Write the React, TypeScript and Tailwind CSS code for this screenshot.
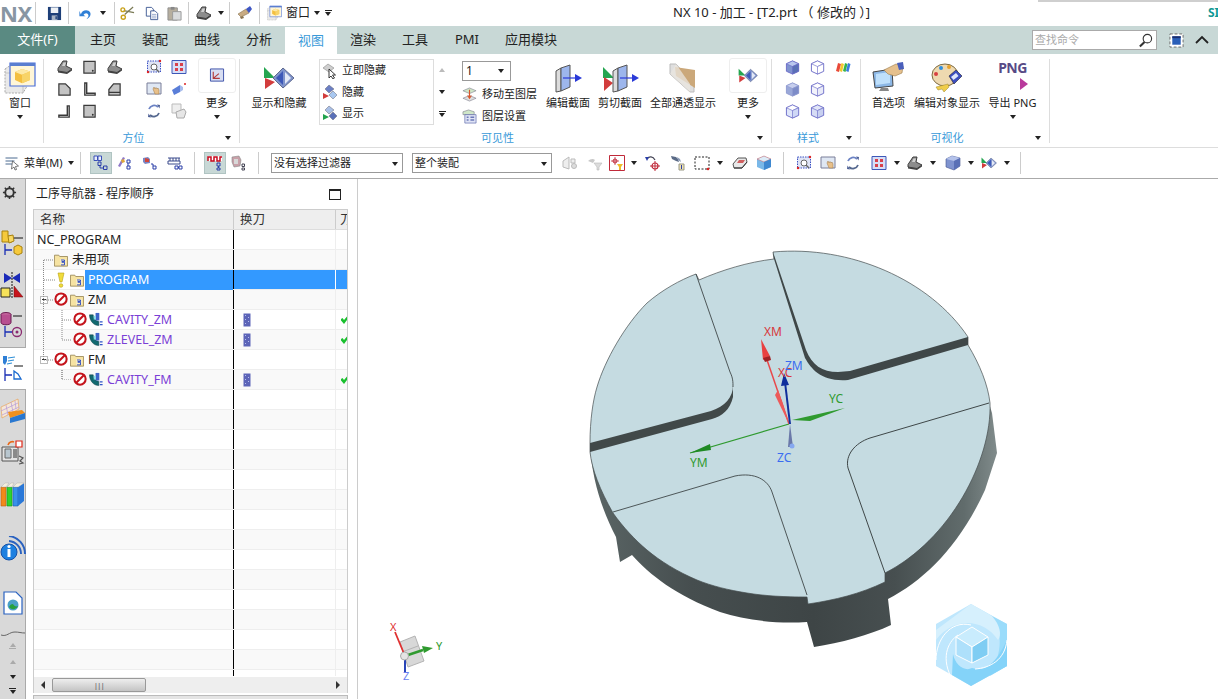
import type { ReactNode } from "react";

function Svg({ c = "w-4 h-4", v = "0 0 16 16", children }: { c?: string; v?: string; children: ReactNode }) {
  return (
    <svg viewBox={v} className={`${c} shrink-0 block`}>
      {children}
    </svg>
  );
}

function Caret({ c = "" }: { c?: string }) {
  return <span className={`block w-0 h-0 shrink-0 border-x-[3.5px] border-t-[4px] border-x-transparent border-t-[#222] ${c}`} />;
}

function Sep({ c = "" }: { c?: string }) {
  return <span className={`block w-px h-[22px] shrink-0 bg-[#ccc] ${c}`} />;
}

/* ---- quick access ---- */
const Save = () => (
  <Svg c="w-[15px] h-[15px] ml-[11px]">
    <path d="M1 1h14v14H1z" fill="#1d3f78" />
    <path d="M4 1.500h8v6H4z" fill="#eef1f5" />
    <path d="M5 10h6v5H5z" fill="#a7b3c4" />
    <path d="M9 11h1.500v3H9z" fill="#1d3f78" />
  </Svg>
);
const Undo = () => (
  <Svg c="w-[15px] h-[15px] ml-[9px]">
    <path d="M3 9C4 4 11 3 13 7c1.300 3-1 6-4 7 2-2 3-4 1.500-5.500C9 7 6.500 8 6 9.500L8 11H1.500V5z" fill="#2f7fd6" />
  </Svg>
);
const Scissors = () => (
  <Svg c="w-[15px] h-[15px] ml-[5px]">
    <path d="M14 1L5 9M15 7L4 5" stroke="#7a7a55" strokeWidth="1.300" />
    <circle cx="3.500" cy="12" r="2.200" fill="none" stroke="#c9a21c" strokeWidth="1.500" />
    <circle cx="3" cy="4" r="2" fill="none" stroke="#c9a21c" strokeWidth="1.500" />
  </Svg>
);
const Copy = () => (
  <Svg c="w-[14px] h-[15px] ml-[10px]">
    <path d="M1.500 1h6l2 2v8h-8z" fill="#fff" stroke="#34508e" />
    <path d="M6.500 5h5l3 3v7h-8z" fill="#fff" stroke="#34508e" />
    <path d="M8 9h5M8 11h5M8 13h5" stroke="#8fa0c8" />
  </Svg>
);
const Paste = () => (
  <Svg c="w-[15px] h-[15px] ml-[8px]">
    <path d="M1 2h10v13H1z" fill="#b6ae9e" stroke="#8f8f8f" />
    <path d="M4 1h4v3H4z" fill="#888" />
    <path d="M6 6h9v9H6z" fill="#d9dbdd" stroke="#999" />
  </Svg>
);
function TriView({ c = "w-4 h-4" }: { c?: string }) {
  return (
    <Svg c={c}>
      <path d="M1 9.500L6 2h4l-1 5 6 3-5 3.500L1 12z" fill="#8c8c8c" stroke="#3c3c3c" />
      <path d="M1 12l9 1.500L15 10v1.500L10 15 1 13.500z" fill="#3f3f3f" />
      <path d="M6.500 3.500h2.500L8 7H5z" fill="#d0d0d0" />
    </Svg>
  );
}
const Eraser = () => (
  <Svg c="w-4 h-4 ml-[7px]">
    <path d="M1 9l8-5 3 4-8 4z" fill="#c8ab83" stroke="#8a7350" strokeWidth=".6" />
    <path d="M9 4l4-3 2 3-3 4z" fill="#3e56c4" />
    <path d="M3 12l3-1 1 2-3 1z" fill="#8b7450" />
  </Svg>
);
function WinCube({ c = "w-[15px] h-[16px]" }: { c?: string }) {
  return (
    <Svg c={c}>
      <path d="M0.500 3.500l3-2h9v9l-3 5h-9z" fill="#e9e9e9" stroke="#aaa" strokeWidth=".5" strokeDasharray="1 .6" />
      <path d="M0.500 5.500l9 0v10" fill="none" stroke="#bbb" strokeWidth=".4" />
      <path d="M3 0.500h12.500v11.500H3z" fill="#fff6d8" stroke="#4a6ed8" strokeWidth=".6" />
      <path d="M3 0.500h12.500v1.500H3z" fill="#5a7ed0" />
      <path d="M9 3.500l4 1.300v4.200l-4 1.600-3.500-1.600V5z" fill="#f4bf3f" />
      <path d="M5.500 5l3.500 1.400 4-1.600-4-1.300z" fill="#fde9a6" />
      <path d="M9 6.400l4-1.600V9l-4 1.600z" fill="#f8d468" />
    </Svg>
  );
}

/* ---- orientation views ---- */
const vFront = "M2 1.500h12v12.500H2z";
function View({ d, dot }: { d: string; dot?: boolean }) {
  return (
    <Svg c="w-[15px] h-[15px]">
      <path d={d} fill="#c4c4c4" stroke="#3a3a3a" strokeWidth="1.300" />
      {dot && <circle cx="11.500" cy="11.500" r="1" fill="#333" />}
    </Svg>
  );
}
function LView({ d }: { d: string }) {
  return (
    <Svg c="w-[15px] h-[15px]">
      <path d={d} fill="none" stroke="#3a3a3a" strokeWidth="1.500" />
    </Svg>
  );
}
const FitIcon = () => (
  <Svg>
    <path d="M1.500 2h13v11h-13z" fill="#dfe4f6" stroke="#3b50c2" strokeDasharray="1.500 1" />
    <circle cx="8" cy="8" r="3" fill="#fff" stroke="#666" />
    <path d="M10 10l3 3" stroke="#666" strokeWidth="1.400" />
    <circle cx="14" cy="2" r="1.200" fill="#d22" />
    <circle cx="2" cy="13" r="1.200" fill="#d22" />
  </Svg>
);
const GridFit = () => (
  <Svg>
    <path d="M1 1.500h14v13H1z" fill="#d7def6" stroke="#3d57b8" />
    <path d="M4 4h3v3H4zM9 4h3v3H9zM4 9h3v3H4zM9 9h3v3H9z" fill="#d8404a" />
  </Svg>
);
const PanIcon = () => (
  <Svg>
    <path d="M1 2h14v11H1z" fill="#dfe7f3" stroke="#7a7f99" />
    <path d="M7 8l1-2 1 2 1-1.500 1 1.500 1-1 1 2v4H9z" fill="#e8c08a" stroke="#9c7440" strokeWidth=".5" />
  </Svg>
);
const PerspIcon = () => (
  <Svg>
    <path d="M1 9l8-5v7l-6 3z" fill="#5a7ed8" />
    <path d="M9 4l3 2v3l-3 2z" fill="#a7bcec" />
    <circle cx="14" cy="3" r="1" fill="#d22" />
  </Svg>
);
const RotateIcon = () => (
  <Svg>
    <path d="M3 6a5.500 5.500 0 0 1 9-2" fill="none" stroke="#6c83c4" strokeWidth="1.800" />
    <path d="M13 10a5.500 5.500 0 0 1-9 2" fill="none" stroke="#55688f" strokeWidth="1.800" />
    <path d="M11 1.500l3 .5-.5 3.500zM5 14.500L2 14l.5-3.500z" fill="#4d5f95" />
  </Svg>
);
const FaintDoc = () => (
  <Svg>
    <path d="M1 1h9v9H1z" fill="#eee" stroke="#bbb" />
    <path d="M5 9l8-3 2 3-2 6H6z" fill="#e6e6e6" stroke="#aaa" />
  </Svg>
);
const MoreView = () => (
  <Svg c="w-[16px] h-[15px]">
    <path d="M1 1h14v13H1z" fill="#d8def2" stroke="#3a4fa8" />
    <path d="M4 4v7h7M4 11l6-5" fill="none" stroke="#b23a3a" strokeWidth="1.200" />
  </Svg>
);
function ShowHide({ c = "w-4 h-4" }: { c?: string }) {
  return (
    <Svg c={c} v="0 0 32 24">
      <path d="M1 1l11 11-11 0z" fill="#25a550" />
      <path d="M2 23V12l10 4z" fill="#d23c3c" />
      <path d="M20 2l11 10-11 10-10-10z" fill="#7f93cc" stroke="#5f6a8f" />
      <path d="M20 5v14l-7-7z" fill="#3d58b8" />
      <path d="M22 6l6 6-6 6z" fill="#e4e9f6" />
    </Svg>
  );
}
const MoreShowHide = () => <ShowHide c="w-[20px] h-[15px]" />;
const HideNow = () => (
  <Svg>
    <path d="M1 5l5-4 6 4-5 4z" fill="#cfcfcf" stroke="#888" strokeWidth=".6" />
    <path d="M7 6l0 9 2-2 2 3 1.500-1-2-3 3 0z" fill="#fff" stroke="#222" strokeWidth=".9" />
  </Svg>
);
const HideIcon = ({ show }: { show?: boolean }) => (
  <Svg>
    <path d="M7 1l5 4-5 4-4-4z" fill={show ? "#a9bfe6" : "#6b7fc4"} stroke="#667" strokeWidth=".5" />
    <path d="M11 7l4 4-4 4-4-4z" fill={show ? "#5a70b8" : "#a9c8f0"} stroke="#667" strokeWidth=".5" />
    <path d="M1 9l6 3-6 3z" fill={show ? "#22a34e" : "#d23c3c"} />
  </Svg>
);
const MoveLayer = () => (
  <Svg c="w-[15px] h-[15px]">
    <path d="M1 4l7-3 7 3-7 3z" fill="#cfe6c8" stroke="#778" strokeWidth=".6" />
    <path d="M1 12l7-3 7 3-7 3z" fill="#dedede" stroke="#778" strokeWidth=".6" />
    <path d="M8 3v8M6 9l2 3 2-3" fill="none" stroke="#d8562a" strokeWidth="1.200" />
  </Svg>
);
const LayerSet = () => (
  <Svg c="w-[15px] h-[15px]">
    <path d="M1 3l6-2 6 2v3H1z" fill="#cfe6c8" stroke="#778" strokeWidth=".6" />
    <path d="M3 6h12v9H3z" fill="#dfe3f5" stroke="#5a66a8" strokeWidth=".7" />
    <path d="M5 8h2v1.500H5zM9 8h4v1.500H9zM5 11h2v1.500H5zM9 11h4v1.500H9z" fill="#6c79b8" />
  </Svg>
);
function Section({ cut }: { cut?: boolean }) {
  return (
    <Svg c="w-[37px] h-[30px]" v="0 0 37 30">
      {cut && <path d="M1 4l11 11H1z" fill="#25a550" />}
      {cut && <path d="M2 28V14l9 6z" fill="#d23c3c" />}
      <path d={cut ? "M11 8l5-3v23l-5 1z" : "M6 8l5-3v23l-5 1z"} fill="#dcdcdc" stroke="#555" />
      <path d={cut ? "M16 5l9-3v22l-9 4z" : "M11 5l9-3v22l-9 4z"} fill="#9db6ec" stroke="#555" />
      <path d={cut ? "M18 15h14" : "M13 15h14"} stroke="#2a3ad8" strokeWidth="1.200" />
      <path d={cut ? "M30 11l7 4-7 4z" : "M25 11l7 4-7 4z"} fill="#2a3ad8" />
    </Svg>
  );
}
const Transparent = () => (
  <Svg c="w-[30px] h-[32px]" v="0 0 30 32">
    <path d="M2 2l6 0 18 20v8h-4L2 12z" fill="#dfdfdf" stroke="#bbb" />
    <path d="M7 5l20 3v18L8 14z" fill="#cba87a" />
    <path d="M2 12l20 18v-8L8 2z" fill="#e9e6df" opacity=".75" />
  </Svg>
);
function Cube({ top, left, right, stroke = "#6c6cc8", c = "" }: { top: string; left: string; right: string; stroke?: string; c?: string }) {
  return (
    <Svg c={`w-[15px] h-[15px] ${c}`}>
      <path d="M8 1l6.500 3v8L8 15l-6.500-3V4z" fill={left} stroke={stroke} />
      <path d="M8 1l6.500 3L8 7 1.500 4z" fill={top} stroke={stroke} strokeWidth=".7" />
      <path d="M8 7l6.500-3v8L8 15z" fill={right} stroke={stroke} strokeWidth=".7" />
    </Svg>
  );
}
const Rainbow = () => (
  <Svg>
    <path d="M1 12L3 4l3 1-2 8z" fill="#e94a3a" />
    <path d="M4.500 12l2-8 2.500 1-2 8z" fill="#f4c92e" />
    <path d="M8 12l2-8 2.500 1-2 8z" fill="#36b44a" />
    <path d="M11 12l2-8 2.500 1-2 8z" fill="#3a7be0" />
  </Svg>
);
const Prefs = () => (
  <Svg c="w-[33px] h-[32px]" v="0 0 33 32">
    <path d="M1 10l19-3 1 17-18 2z" fill="#8db8e6" stroke="#444" />
    <path d="M4 12l14-2v11l-14 2z" fill="#bfe0fb" />
    <path d="M9 26h7l1 3H7z" fill="#888" />
    <path d="M12 8l12-6 7 2-1 7-7 3-7-2z" fill="#e5c08d" stroke="#9a7a4a" strokeWidth=".6" />
    <path d="M25 1l6-1 1 7-5 1z" fill="#4a5fbb" />
  </Svg>
);
const Palette = () => (
  <Svg c="w-[32px] h-[32px]" v="0 0 32 32">
    <ellipse cx="14" cy="13" rx="13" ry="11" fill="#eed9b0" stroke="#7d6a40" />
    <circle cx="10" cy="6" r="2" fill="#2f8fe0" />
    <circle cx="18" cy="5" r="2" fill="#e8a22c" />
    <circle cx="5" cy="12" r="2" fill="#d84040" />
    <path d="M18 14l7-6 6 6-8 8z" fill="#3c4ec0" stroke="#223" strokeWidth=".6" />
    <path d="M20 15l5-4 2.500 3-5 4z" fill="#dfe6fb" />
    <path d="M5 25l12-3 1 3-5 5-2-3-4 1z" fill="#f0cd4a" stroke="#9c862c" strokeWidth=".5" />
  </Svg>
);
const Search = () => (
  <Svg c="w-[15px] h-[15px]">
    <circle cx="10" cy="6" r="4.500" fill="#fff" stroke="#333" strokeWidth="1.200" />
    <path d="M7 9.500L2 14.500" stroke="#333" strokeWidth="2.200" />
  </Svg>
);

/* ---- navigator tree ---- */
const Folder = () => (
  <Svg c="w-[14px] h-[14px]">
    <path d="M0.500 2.500h5l1 1.500h9v11H0.500z" fill="#f6e3a2" stroke="#9c8a5a" />
    <path d="M7 7h6.500v6.500H7z" fill="#f8edc6" />
    <path d="M8 8h4v1.800H9v.8h3v3H8" fill="none" stroke="#1f3fc0" strokeWidth="1" />
  </Svg>
);
const NoEntry = () => (
  <Svg c="w-[15px] h-[15px]">
    <circle cx="7.500" cy="7.500" r="6" fill="#fff" stroke="#c4141c" strokeWidth="2.200" />
    <path d="M3.500 11.500l8-8" stroke="#c4141c" strokeWidth="2.200" />
  </Svg>
);
const Bulb = () => (
  <Svg c="w-[8px] h-[16px]" v="0 0 8 16">
    <path d="M1 1h6L5 10H3z" fill="#f0dc3c" stroke="#b8a010" strokeWidth=".6" />
    <circle cx="4" cy="13.500" r="1.800" fill="#f0dc3c" stroke="#b8a010" strokeWidth=".6" />
  </Svg>
);
const OpIcon = () => (
  <Svg c="w-[15px] h-[15px]">
    <path d="M0.500 3h4c0 4 2 6.500 6 7v4.500C5 14.500 0.500 9.500 0.500 3z" fill="#126a70" stroke="#0a3a40" strokeWidth=".5" />
    <path d="M7 1h4v8H7z" fill="#3d64c8" />
    <path d="M5 4h2v4H5z" fill="#7ee0ea" />
    <path d="M11.500 10.500h3M11.500 13.500h3" stroke="#2f55c8" strokeWidth="1.200" />
  </Svg>
);
const ToolBar = () => (
  <Svg c="w-[8px] h-[14px]" v="0 0 8 14">
    <path d="M0.500 0.500h7v13h-7z" fill="#5c64b8" />
    <path d="M2 2h1v1H2zM5 4h1v1H5zM2 6h1v1H2zM5 8h1v1H5zM2 10h1v1H2z" fill="#b8c0ee" />
  </Svg>
);
const Tick = () => (
  <Svg c="w-[8px] h-[8px]" v="0 0 8 8">
    <path d="M0 3l1.500-1 1.500 2L6.500 0 8 1.500 3 8 0 4.500z" fill="#19c02e" />
  </Svg>
);
const Minus = () => (
  <span className="flex items-center justify-center w-[8px] h-[8px] shrink-0 border border-[#bbb] bg-white">
    <span className="block w-[4px] h-px bg-[#333]" />
  </span>
);

type TreeRow = { kind: "root" | "unused" | "program" | "group" | "op"; name: string };
const treeRows: TreeRow[] = [
  { kind: "root", name: "NC_PROGRAM" },
  { kind: "unused", name: "未用项" },
  { kind: "program", name: "PROGRAM" },
  { kind: "group", name: "ZM" },
  { kind: "op", name: "CAVITY_ZM" },
  { kind: "op", name: "ZLEVEL_ZM" },
  { kind: "group", name: "FM" },
  { kind: "op", name: "CAVITY_FM" },
];

function Row({ row, index }: { row?: TreeRow; index: number }) {
  const selected = row?.kind === "program";
  return (
    <div className={`flex h-[20px] shrink-0 border-b border-[#eee] text-[12.5px] text-[#222] ${index % 2 === 1 ? "bg-[#f9f9f9]" : "bg-white"}`}>
      <div className="flex items-center w-[199px] shrink-0">
        {row?.kind === "root" && <span className="ml-[3px] mt-px">{row.name}</span>}
        {row?.kind === "unused" && (
          <>
            <span className="ml-[20px]"><Folder /></span>
            <span className="ml-[4px] mt-px">{row.name}</span>
          </>
        )}
        {row?.kind === "program" && (
          <>
            <span className="ml-[23px]"><Bulb /></span>
            <span className="ml-[5px]"><Folder /></span>
            <span className="flex items-center ml-px h-[20px] flex-1 bg-[#3399ff] text-white pl-[3px] pt-px">{row.name}</span>
          </>
        )}
        {row?.kind === "group" && (
          <>
            <span className="ml-[6px]"><Minus /></span>
            <span className="ml-[6px]"><NoEntry /></span>
            <span className="ml-px"><Folder /></span>
            <span className="ml-[4px] mt-px">{row.name}</span>
          </>
        )}
        {row?.kind === "op" && (
          <>
            <span className="ml-[39px]"><NoEntry /></span>
            <span className="ml-px"><OpIcon /></span>
            <span className="ml-[3px] mt-px text-[#7a3fd6]">{row.name}</span>
          </>
        )}
      </div>
      <div className="w-px shrink-0 bg-black" />
      <div className={`flex items-center w-[101px] shrink-0 pl-[9px] ${selected ? "bg-[#3399ff]" : ""}`}>
        {row?.kind === "op" && <ToolBar />}
      </div>
      <div className={`w-px shrink-0 ${selected ? "bg-white" : "bg-[#eee]"}`} />
      <div className={`flex items-center flex-1 overflow-hidden pl-[5px] ${selected ? "bg-[#3399ff]" : ""}`}>
        {row?.kind === "op" && <Tick />}
      </div>
    </div>
  );
}

/* ---- ribbon bits ---- */
function Large({ icon, label, caret, c = "" }: { icon: ReactNode; label: string; caret?: boolean; c?: string }) {
  return (
    <div className={`flex flex-col items-center shrink-0 ${c}`}>
      <div className="flex items-center justify-center h-[37px]">{icon}</div>
      <div className="h-[14px] leading-[14px] whitespace-nowrap">{label}</div>
      {caret && <Caret c="mt-[5px]" />}
    </div>
  );
}

function More({ c = "", icon }: { c?: string; icon: ReactNode }) {
  return (
    <div className={`flex flex-col items-center w-[38px] shrink-0 ${c}`}>
      <div className="flex items-center justify-center w-[38px] h-[35px] mt-[-1px] mb-[3px] rounded-[3px] border border-[#eee]">
        {icon}
      </div>
      <div className="h-[14px] leading-[14px]">更多</div>
      <Caret c="mt-[5px]" />
    </div>
  );
}

function Group({ w, title, plain, children }: { w: string; title: string; plain?: boolean; children: ReactNode }) {
  return (
    <div className={`flex flex-col h-[84px] shrink-0 border-r border-[#ddd] ${w}`}>
      <div className="flex h-[72px] items-start">{children}</div>
      <div className="flex h-[12px] leading-[14px]">
        <span className="flex-1 text-center text-[#3a9ad9]">{title}</span>
        {!plain && <span className="flex items-center w-[16px] h-[14px] pl-[2px]"><Caret /></span>}
      </div>
    </div>
  );
}

/* ---- side rail ---- */
const RailAssembly = () => (
  <Svg c="w-[26px] h-[28px]" v="0 0 26 28">
    <path d="M2 2h6v5h4v6H2z" fill="#f6c93c" stroke="#a8820e" />
    <path d="M8 7l5-1 1 6-5 2z" fill="#f8d863" stroke="#a8820e" />
    <path d="M14 9h9" stroke="#111" />
    <path d="M5 15v11M5 21h7" stroke="#1a2fb4" strokeWidth="1.300" />
    <path d="M14 18l4-2 4 2v6l-4 2-4-2z" fill="#f6c93c" stroke="#a8820e" />
  </Svg>
);
const RailMirror = () => (
  <Svg c="w-[26px] h-[28px]" v="0 0 26 28">
    <path d="M4 2l8 5-8 5zM20 2l-8 5 8 5z" fill="#1a2ab8" />
    <path d="M12 1v26" stroke="#111" strokeDasharray="2 1" />
    <path d="M1 17h9v9H1z" fill="#f6e25a" stroke="#222" />
    <path d="M14 26V15l9 11z" fill="#c8141c" stroke="#611" strokeWidth=".5" />
  </Svg>
);
const RailTool = () => (
  <Svg c="w-[26px] h-[28px]" v="0 0 26 28">
    <ellipse cx="6" cy="3.500" rx="5" ry="2" fill="#c86aa0" stroke="#6a1a50" />
    <path d="M1 3.500v8c0 3 10 3 10 0v-8" fill="#b84f90" stroke="#6a1a50" />
    <path d="M13 5h9" stroke="#111" />
    <path d="M5 15v11M5 21h7" stroke="#1a2fb4" strokeWidth="1.300" />
    <circle cx="17" cy="21" r="4.500" fill="none" stroke="#8a2a70" strokeWidth="1.300" />
    <circle cx="17" cy="21" r="1.500" fill="#8a2a70" />
  </Svg>
);
const RailOps = () => (
  <Svg c="w-[26px] h-[28px]" v="0 0 26 28">
    <path d="M3 1h4v5l-2 4-2-2z" fill="#2f7fd6" />
    <path d="M8 3l7-1M8 6l6-1M7 9l5-1" stroke="#2f8fd6" strokeWidth="1.200" />
    <path d="M14 11h9" stroke="#111" />
    <path d="M5 13v13M5 20h7" stroke="#1a2fb4" strokeWidth="1.300" />
    <path d="M14 16v8h7l-3-5z" fill="#fff" stroke="#1a6ad0" strokeWidth="1.300" />
  </Svg>
);
const RailMesh = () => (
  <Svg c="w-[26px] h-[26px]" v="0 0 26 26">
    <path d="M1 9l17-8 1 10-17 9z" fill="#f5e7d8" stroke="#e89a4a" strokeWidth=".6" />
    <path d="M6 7l2 10M11 4l2 10M15 3l1 8M1 13l17-8M2 17l17-8" stroke="#b49ad8" strokeWidth=".7" />
    <path d="M8 14l14-2 3 3-15 5z" fill="#f0901e" />
    <path d="M10 20l15-5v6l-15 4z" fill="#2a78d0" />
  </Svg>
);
const RailMachine = () => (
  <Svg c="w-[26px] h-[26px]" v="0 0 26 26">
    <path d="M2 7h16v14H2z" fill="#e3e3e3" stroke="#555" />
    <path d="M5 9h6v9H5z" fill="#b8c6cf" stroke="#666" />
    <path d="M13 9h4v9h-4z" fill="#8a8a8a" />
    <path d="M8 5c1-3 4-4 6-3" fill="none" stroke="#e86a1a" strokeWidth="1.600" />
    <path d="M16 1h6v6h-6z" fill="#fff" stroke="#e02a1a" strokeWidth="1.200" />
    <path d="M19 16l4 2-3 3 3 2-4 1" fill="none" stroke="#555" strokeWidth="1.200" />
  </Svg>
);
const RailBooks = () => (
  <Svg c="w-[26px] h-[26px]" v="0 0 26 26">
    <path d="M1 6h5v19H1z" fill="#f28a1a" stroke="#b85a10" strokeWidth=".6" />
    <path d="M7 6h5v19H7z" fill="#2ed42e" stroke="#149014" strokeWidth=".6" />
    <path d="M13 6h5v19h-5z" fill="#3a90ea" stroke="#1a5ab0" strokeWidth=".6" />
    <path d="M18 6l6-4v18l-6 5z" fill="#2a78d8" />
    <path d="M1 6l4-4h4L6 6zM7 6l4-4h3l-2 4zM13 6l4-4h7l-6 4z" fill="#f3efe0" stroke="#aaa" strokeWidth=".4" />
  </Svg>
);
const RailInfo = () => (
  <Svg c="w-[26px] h-[26px]" v="0 0 26 26">
    <path d="M9 5a13 13 0 0 1 12 13" fill="none" stroke="#2a62c0" strokeWidth="2" />
    <path d="M9 0a18 18 0 0 1 16 18" fill="none" stroke="#2a62c0" strokeWidth="2" />
    <circle cx="9" cy="16" r="8" fill="#1e80e0" stroke="#1450a8" />
    <path d="M7.500 13h3v8h-3z" fill="#fff" />
    <circle cx="9" cy="10.500" r="1.600" fill="#fff" />
  </Svg>
);
const RailWeb = () => (
  <Svg c="w-[22px] h-[24px]" v="0 0 22 24">
    <path d="M2 1h12l6 6v16H2z" fill="#fff" stroke="#2a62c0" strokeWidth="1.200" />
    <circle cx="11" cy="14" r="5.500" fill="#4aa0c8" />
    <path d="M7 16c2 3 7 3 9-1-2 1-4 0-5-2-2 0-3 1-4 3z" fill="#26a03e" />
  </Svg>
);

/* ---- toolbar ---- */
const Nav = () => (
  <Svg>
    <path d="M1 1h3.500v4.500H1zM5 1h3.500v4.500H5z" fill="#e8eefc" stroke="#3a50b8" />
    <path d="M5 7h3v3.500H5zM10.500 11h3.500v3.500h-3.500zM7 10.500v2.500h3.500" fill="none" stroke="#2a3ea8" />
  </Svg>
);
const Nav2 = () => (
  <Svg>
    <path d="M1 11l5-9 2 1-5 9z" fill="#8f78c8" />
    <path d="M4 5l3-1 1 3-3 1z" fill="#e0a83a" />
    <path d="M10 5h3v3h-3zM10 11h3v3h-3zM11 8v3" fill="none" stroke="#2a3ea8" />
  </Svg>
);
const Nav3 = () => (
  <Svg>
    <path d="M1 3l5-1 2 2v4l-5 1-2-2z" fill="#7a86c4" />
    <path d="M3 3l4 1v3H3z" fill="#d0463c" />
    <path d="M9 9h2v5h3v-3h-3" fill="none" stroke="#2a3ea8" />
  </Svg>
);
const Nav4 = () => (
  <Svg>
    <path d="M1 3h12M1 6h12v3H1zM3 3v3M6 3v3M9 3v3M12 3v3" fill="none" stroke="#3a4a8c" />
    <path d="M8 11h3v3H8zM12 11h3v3h-3zM11 12.500h1" fill="none" stroke="#2a3ea8" />
  </Svg>
);
const NavRed = () => (
  <Svg>
    <path d="M1 1h14v5H1z" fill="#fff" />
    <path d="M1 6V2h3v4h3V2h3v4h3V2h2" fill="none" stroke="#c80a1e" strokeWidth="1.500" />
    <path d="M10 8h3v3h-3zM10 13h3v2h-3zM11.500 11v2" fill="none" stroke="#2a3ea8" />
  </Svg>
);
const NavFaint = () => (
  <Svg>
    <path d="M1 2l7-1 2 4-1 6-6 1-2-5z" fill="#c8a0a8" stroke="#888" strokeWidth=".6" />
    <path d="M3 4h4v5H3z" fill="#d8d8d8" />
    <path d="M11 9h2.500v2.500H11zM11 13h2.500v2H11z" fill="none" stroke="#445" />
  </Svg>
);
const Faint1 = () => (
  <Svg>
    <path d="M1 6l6-4v12l-6-2zM9 4h4v4H9z" fill="#eee" stroke="#bbb" />
    <circle cx="12" cy="11" r="2.500" fill="#ddd" stroke="#bbb" />
  </Svg>
);
const Faint2 = () => (
  <Svg>
    <path d="M1 6c2-2 5-3 7-1l-2 3z" fill="#c8c8c8" />
    <path d="M7 8h8l-3 4v3h-2v-3z" fill="#dcdcdc" stroke="#bbb" strokeWidth=".6" />
  </Svg>
);
const FilterBox = () => (
  <Svg>
    <path d="M0.500 0.500h15v15h-15z" fill="#fff" stroke="#c02a3a" />
    <circle cx="6" cy="6" r="2" fill="none" stroke="#c02a3a" />
    <path d="M6 2v8M2 6h8" stroke="#c02a3a" strokeWidth=".8" />
    <path d="M8 9h6l-2 3v3h-2v-3z" fill="#f0bc2a" />
  </Svg>
);
const Pick = () => (
  <Svg>
    <circle cx="10" cy="11" r="3" fill="none" stroke="#c02a3a" strokeWidth="1.200" />
    <path d="M10 6v10M5 11h10" stroke="#c02a3a" />
    <path d="M2 4c2-3 6-3 8 1" fill="none" stroke="#445" strokeWidth="1.200" />
    <path d="M0 2l4 0-2 4z" fill="#2a3ea8" />
  </Svg>
);
const Binoc = () => (
  <Svg>
    <path d="M1 1l5 1 2 2 1 3-3-1-4-2z" fill="#5a6a86" />
    <path d="M7 2l3 2 1 3-3-2z" fill="#8a9ab6" />
    <path d="M9 9h5v6H9z" fill="#f0e2b0" stroke="#998" />
    <path d="M11 10h1v4h-1z" fill="#2a3ea8" />
  </Svg>
);
const DashBox = () => (
  <Svg>
    <path d="M1 2h14v12H1z" fill="none" stroke="#222" strokeDasharray="2 1.500" />
    <circle cx="14" cy="14" r="1.300" fill="#d22" />
  </Svg>
);
const Eraser3d = () => (
  <Svg>
    <path d="M1 9l5-6h8l1 4-5 6H2z" fill="#e8e8e8" stroke="#555" />
    <path d="M7 5h6l-2 3H5z" fill="#d06060" />
    <path d="M2 13l8 0 5-6" fill="none" stroke="#333" />
  </Svg>
);
const CubeWire = () => (
  <Svg>
    <path d="M1 4l7-3 7 3v8l-7 3-7-3z" fill="#7ab8e8" />
    <path d="M1 4l7 3 7-3-7-3z" fill="#dcecf8" stroke="#d06060" strokeWidth=".5" />
    <path d="M8 7v8l7-3V4z" fill="#3f88d0" />
  </Svg>
);
const BlueBox = () => (
  <Svg>
    <path d="M1 4l6-3 8 2v8l-6 4-8-3z" fill="#7f93cf" stroke="#44548f" strokeWidth=".6" />
    <path d="M1 4l8 2 6-3-8-2z" fill="#b4c2ea" />
    <path d="M9 6v9l6-4V3z" fill="#5a70b6" />
  </Svg>
);

/* ---- part in the graphics window ---- */
function Viewport() {
  return (
    <svg viewBox="358 179 860 520" className="block w-full h-full">
      <defs>
        <linearGradient id="wall" gradientUnits="userSpaceOnUse" x1="589" y1="0" x2="997" y2="0">
          <stop offset="0" stopColor="#5b6666" />
          <stop offset="0.25" stopColor="#464e4f" />
          <stop offset="0.55" stopColor="#3e4546" />
          <stop offset="0.75" stopColor="#474f50" />
          <stop offset="0.92" stopColor="#616c6c" />
          <stop offset="1" stopColor="#808b8b" />
        </linearGradient>
      </defs>
      <path
        d="M590 445C592 480 602 510 616 537L620 562L632 555C650 575 675 595 720 612C745 620 775 624 807 622L814 647C840 643 870 635 891 625L888 599C925 580 960 545 985 490L997 453L992 413L989 403L790 300Z"
        fill="url(#wall)"
      />
      <path
        d="M590 443C590 420 593 400 597 387C605 360 625 325 647 303C662 290 680 280 696 274L699 280C722 270 748 262 774 259L773 252C850 245 930 280 968 337L968 345C980 365 988 385 990 403C992 460 950 540 885 573L885 582C860 594 835 600 808 604L807 597C785 597 765 596 747 593C728 590 712 586 697 580C678 572 660 561 647 550C635 540 623 527 613 513C600 490 592 470 590 452Z"
        fill="#c5dbe1"
        stroke="#454c4d"
        strokeWidth="0.7"
      />
      {/* walls of the raised pads */}
      <path d="M773 252L806 350C812 365 822 372 838 372L850 371L968 337L968 345L848 380C822 382 812 370 805 358L774 259Z" fill="#3f4748" />
      <path d="M590 443L711 411C725 406 733 398 733 385L733 397C730 410 722 416 712 419L590 452Z" fill="#414949" />
      <path d="M696 274L730 372C733 378 733 382 733 387" fill="none" stroke="#3f4748" strokeWidth="0.9" />
      <path d="M613 512L735 476C755 472 768 480 772 492L807 595" fill="none" stroke="#3f4748" strokeWidth="0.9" />
      <path d="M989 403L870 438C855 443 845 455 848 468L885 573" fill="none" stroke="#3f4748" strokeWidth="1" />
      {/* datum axes */}
      <path d="M789 424L690 453" stroke="#2f9a2f" strokeWidth="1.300" />
      <path d="M690 453L710 444L711 450Z" fill="#1f8a24" />
      <path d="M792 420L845 408L810 421Z" fill="#2f9a2f" />
      <path d="M789 424L766 357" stroke="#e8484a" strokeWidth="1.500" />
      <path d="M778 390L783 404L789 424L775 395Z" fill="#ec5a5a" />
      <path d="M761 339L770 356L763 360Z" fill="#e84040" />
      <path d="M763 358L770 356L771 360L765 362Z" fill="#a02024" />
      <path d="M790 424L785 382" stroke="#0f2f9c" strokeWidth="2" />
      <path d="M784 373L789 385L781 386Z" fill="#0f2f9c" />
      <path d="M790 424L793 447L788 447Z" fill="#6a78a8" />
      <circle cx="792" cy="446" r="2.500" fill="#86a8f0" />
      <g fontSize="12" fontFamily="Noto Sans, sans-serif">
        <text x="764" y="336" fill="#d8383c">XM</text>
        <text x="778" y="377" fill="#d8383c">XC</text>
        <text x="785" y="370" fill="#3a6cf0">ZM</text>
        <text x="829" y="403" fill="#2f9a2f">YC</text>
        <text x="690" y="467" fill="#2f9a2f">YM</text>
        <text x="777" y="462" fill="#3a6cf0">ZC</text>
      </g>
      {/* small triad */}
      <path d="M400 642L415 636L424 661L408 667Z" fill="#d8d8d8" stroke="#b4b4b4" />
      <path d="M402 652L418 646" stroke="#b4b4b4" />
      <path d="M405 656L395 632" stroke="#e03030" strokeWidth="1.800" />
      <path d="M405 656L405 672" stroke="#1230b0" strokeWidth="1.800" />
      <path d="M405 656L423 650" stroke="#2f9a2f" strokeWidth="2.500" />
      <path d="M422 646L433 648L424 653Z" fill="#2f9a2f" />
      <circle cx="404.500" cy="656" r="4" fill="#e4e4e4" stroke="#aaa" />
      <g fontSize="11" fontFamily="Noto Sans, sans-serif">
        <text x="390" y="631" fill="#e03030">X</text>
        <text x="436" y="650" fill="#2f9a2f">Y</text>
        <text x="403" y="680" fill="#6a80f0">Z</text>
      </g>
      {/* watermark */}
      <path d="M971 604L1007 624V666L971 686L936 666V624Z" fill="#bfe7fd" />
      <path d="M990 615L1007 624V666L990 676C1003 650 1003 632 990 615Z" fill="#9adcfb" />
      <path d="M936 630L971 604L992 616C1000 625 1002 635 998 640C985 620 955 615 936 640Z" fill="#d6f0fd" />
      <path d="M953 654C955 665 965 672 972 668C985 672 995 665 1007 640V666L971 686L952 675Z" fill="#84d3f9" />
      <path d="M936 660C936 640 950 620 971 625M951 677C940 655 950 640 958 635M1007 640C1005 660 990 668 975 669" fill="none" stroke="#fff" strokeWidth="1" />
      <path d="M972 627L988 637L972 647L956 637Z" fill="#c9ecfd" stroke="#fff" />
      <path d="M956 637L972 647V663L956 655Z" fill="#aee0fb" stroke="#fff" />
      <path d="M988 637L972 647V663L988 655Z" fill="#7fcdf3" stroke="#fff" />
    </svg>
  );
}

export default function App() {
  return (
    <div className="flex flex-col w-[1218px] h-[699px] overflow-hidden bg-white text-[11px] text-[#222] font-['Noto_Sans','Noto_Sans_CJK_SC',sans-serif]">
      {/* title bar */}
      <div className="relative flex items-center h-[26px] shrink-0">
        <div className="flex items-center w-[673px] shrink-0">
          <span className="w-[31px] text-[22px] leading-none font-bold tracking-[-0.5px] whitespace-nowrap text-[#8896a3]">NX</span>
          <Sep c="ml-[4px]" />
          <Save />
          <Sep c="ml-[6px]" />
          <Undo />
          <Caret c="ml-[7px]" />
          <Sep c="ml-[8px]" />
          <Scissors />
          <Copy />
          <Paste />
          <Sep c="ml-[6px]" />
          <TriView c="w-4 h-4 ml-[7px]" />
          <Caret c="ml-[6px]" />
          <Sep c="ml-[5px]" />
          <Eraser />
          <Sep c="ml-[6px]" />
          <WinCube c="w-[15px] h-[16px] ml-[7px]" />
          <span className="ml-[4px] text-[12px] w-[24px]">窗口</span>
          <Caret c="ml-[4px]" />
          <span className="flex flex-col ml-[5px] gap-px">
            <span className="block w-[7px] h-px bg-[#222]" />
            <Caret />
          </span>
        </div>
        <span className="text-[13px] whitespace-nowrap">NX 10 - 加工 - [T2.prt （ 修改的 ）]</span>
        <span className="ml-auto w-[10px] text-[12px] font-bold text-[#0f9a96]">SI</span>
        <span className="absolute top-0 right-0 w-[180px] h-[2px] bg-[#cfcfcf]" />
      </div>

      {/* tabs */}
      <div className="flex items-stretch h-[28px] shrink-0 bg-[#c8d8d6] text-[13px]">
        <div className="flex items-center justify-center w-[75px] bg-[#5a8a82] text-white">文件(F)</div>
        <div className="w-[2px]" />
        {["主页", "装配", "曲线", "分析"].map((t) => (
          <div key={t} className="flex items-center justify-center w-[52px]">{t}</div>
        ))}
        <div className="flex items-center justify-center w-[52px] mt-px bg-white text-[#3a9ad9]">视图</div>
        {["渲染", "工具", "PMI"].map((t) => (
          <div key={t} className="flex items-center justify-center w-[52px]">{t}</div>
        ))}
        <div className="flex items-center justify-center w-[76px]">应用模块</div>
        <div className="flex items-center justify-between w-[125px] h-[20px] self-center ml-auto bg-white border border-[#aaa] pl-[2px] pr-[3px] text-[11px] text-[#aaa]">
          查找命令
          <Search />
        </div>
        <div className="flex items-center w-[61px] pl-[12px]">
          <Svg c="w-[15px] h-[15px]">
            <path d="M1 1h14v14H1z" fill="#fff" stroke="#666" strokeDasharray="3 2" />
            <path d="M3.500 3.500h9v9h-9z" fill="#2a5fb8" />
            <path d="M3.500 3.500h9v2h-9z" fill="#1a2f70" />
          </Svg>
          <Svg c="w-[14px] h-[10px] ml-[11px]" v="0 0 14 10">
            <path d="M1 8l6-6 6 6" fill="none" stroke="#222" strokeWidth="1.800" />
          </Svg>
        </div>
      </div>

      {/* ribbon */}
      <div className="flex h-[94px] shrink-0 pt-[5px] border-b border-[#ddd]">
        <Group w="w-[44px]" title="" plain>
          <Large c="w-[40px]" caret label="窗口" icon={<WinCube c="w-[32px] h-[32px]" />} />
        </Group>
        <Group w="w-[196px]" title="方位">
          <div className="grid grid-cols-[25px_25px_25px] auto-rows-[22px] justify-items-center items-center ml-[8px] mt-[-3px]">
            <TriView />
            <View dot d={vFront} />
            <TriView />
            <View d="M2 2h7l5 5v7H2z" />
            <LView d="M3 1v13h11v-2H5V1z" />
            <View d="M2 14V8l5-6h7v12zM2 11h12" />
            <LView d="M13 2v12H2v-2h9V2z" />
            <View dot d={vFront} />
          </div>
          <div className="grid grid-cols-[25px_25px] auto-rows-[22px] justify-items-center items-center ml-[14px] mt-[-3px]">
            <FitIcon />
            <GridFit />
            <PanIcon />
            <PerspIcon />
            <RotateIcon />
            <FaintDoc />
          </div>
          <More c="ml-[7px]" icon={<MoreView />} />
        </Group>
        <Group w="w-[532px]" title="可见性">
          <Large c="ml-[11px] w-[56px]" label="显示和隐藏" icon={<ShowHide c="w-[32px] h-[24px]" />} />
          <div className="flex flex-col w-[115px] h-[66px] ml-[12px] border border-[#ddd] shrink-0">
            {[
              { t: "立即隐藏", i: <HideNow /> },
              { t: "隐藏", i: <HideIcon /> },
              { t: "显示", i: <HideIcon show /> },
            ].map((r) => (
              <div key={r.t} className="flex items-center h-[22px] pl-[2px] gap-[4px]">
                {r.i}
                <span>{r.t}</span>
              </div>
            ))}
          </div>
          <div className="flex flex-col items-center w-[16px] h-[66px] shrink-0">
            <div className="flex items-center h-[22px]">
              <span className="block w-0 h-0 border-x-[3.5px] border-b-[4px] border-x-transparent border-b-[#bbb]" />
            </div>
            <div className="flex items-center h-[22px]"><Caret /></div>
            <div className="flex flex-col items-center justify-center h-[22px] gap-px">
              <span className="block w-[7px] h-px bg-[#222]" />
              <Caret />
            </div>
          </div>
          <div className="flex flex-col w-[76px] ml-[12px] shrink-0">
            <div className="flex items-center justify-between w-[49px] h-[20px] mt-[2px] border border-[#999] px-[3px] text-[12px]">
              1
              <Caret c="mr-[3px]" />
            </div>
            <div className="flex items-center gap-[5px] h-[22px] mt-[2px]">
              <MoveLayer />
              <span className="whitespace-nowrap">移动至图层</span>
            </div>
            <div className="flex items-center gap-[5px] h-[22px]">
              <LayerSet />
              <span className="whitespace-nowrap">图层设置</span>
            </div>
          </div>
          <Large c="ml-[8px] w-[44px]" label="编辑截面" icon={<Section />} />
          <Large c="ml-[8px] w-[44px]" label="剪切截面" icon={<Section cut />} />
          <Large c="ml-[8px] w-[66px]" label="全部通透显示" icon={<Transparent />} />
          <More c="ml-[13px]" icon={<MoreShowHide />} />
        </Group>
        <Group w="w-[89px]" title="样式">
          <div className="grid grid-cols-[25px_25px_25px] auto-rows-[22px] justify-items-center items-center ml-[8px] mt-[-3px]">
            <Cube top="#b9c6ee" left="#7f93cf" right="#5a70b6" />
            <Cube top="#fff" left="#fff" right="#fff" />
            <Rainbow />
            <Cube top="#c7cfee" left="#9aa8d8" right="#7d8cc8" stroke="#8f9ad0" />
            <Cube top="#fff" left="#f2f3fb" right="#e8eaf8" />
            <span />
            <Cube top="#fff" left="#dfe6fa" right="#cfd8f6" />
            <Cube top="#e2e6f8" left="#d6dcf5" right="#c8d0f0" />
          </div>
        </Group>
        <Group w="w-[189px]" title="可视化">
          <Large c="ml-[11px] w-[33px]" label="首选项" icon={<Prefs />} />
          <Large c="ml-[8px] w-[68px]" label="编辑对象显示" icon={<Palette />} />
          <div className="flex flex-col items-center w-[49px] ml-[7px] shrink-0">
            <div className="flex flex-col items-center h-[37px] pt-px text-[14px] leading-[16px] font-bold tracking-[-0.5px] text-[#574a86]">
              PNG
              <span className="block w-0 h-0 ml-[22px] mt-[2px] border-y-[6px] border-l-[8px] border-y-transparent border-l-[#b83a9c]" />
            </div>
            <div className="h-[14px] leading-[14px] whitespace-nowrap">导出 PNG</div>
            <Caret c="mt-[5px]" />
          </div>
        </Group>
      </div>

      {/* selection bar */}
      <div className="flex items-center h-[31px] shrink-0 border-b border-[#aaa]">
        <Svg c="w-[17px] h-4 ml-[4px]">
          <path d="M1 3h12M1 6h9M1 9h7" stroke="#4a6a90" />
          <path d="M8 6l6 5-3 .5 1 3-1.500.5-1-3L7 14z" fill="#fff" stroke="#444" strokeWidth=".7" />
        </Svg>
        <span className="ml-[3px] mt-px w-[40px] whitespace-nowrap">菜单(M)</span>
        <Caret c="ml-[4px]" />
        <Sep c="ml-[6px]" />
        <span className="flex items-center justify-center ml-[9px] w-[22px] h-[22px] shrink-0 bg-[#c8d8d6] border border-[#b0c4c2]"><Nav /></span>
        <span className="ml-[5px]"><Nav2 /></span>
        <span className="ml-[9px]"><Nav3 /></span>
        <span className="ml-[9px]"><Nav4 /></span>
        <Sep c="ml-[11px]" />
        <span className="flex items-center justify-center ml-[9px] w-[22px] h-[22px] shrink-0 bg-[#c8d8d6] border border-[#b0c4c2]"><NavRed /></span>
        <span className="ml-[5px]"><NavFaint /></span>
        <Sep c="ml-[11px]" />
        <div className="flex items-center justify-between ml-[12px] w-[132px] h-[20px] shrink-0 border border-[#999] px-[2px] pt-px">
          没有选择过滤器
          <Caret c="mr-[2px]" />
        </div>
        <div className="flex items-center justify-between ml-[9px] w-[140px] h-[20px] shrink-0 border border-[#999] px-[2px] pt-px">
          整个装配
          <Caret c="mr-[2px]" />
        </div>
        <span className="ml-[10px]"><Faint1 /></span>
        <span className="ml-[9px]"><Faint2 /></span>
        <span className="ml-[6px]"><FilterBox /></span>
        <Caret c="ml-[6px]" />
        <span className="ml-[8px]"><Pick /></span>
        <span className="ml-[9px]"><Binoc /></span>
        <span className="ml-[8px]"><DashBox /></span>
        <Caret c="ml-[7px]" />
        <span className="ml-[9px]"><Eraser3d /></span>
        <span className="ml-[8px]"><CubeWire /></span>
        <Sep c="ml-[11px]" />
        <span className="ml-[12px]"><FitIcon /></span>
        <span className="ml-[8px]"><PanIcon /></span>
        <span className="ml-[9px]"><RotateIcon /></span>
        <span className="ml-[10px]"><GridFit /></span>
        <Caret c="ml-[7px]" />
        <span className="ml-[7px]"><TriView /></span>
        <Caret c="ml-[7px]" />
        <span className="ml-[9px]"><BlueBox /></span>
        <Caret c="ml-[7px]" />
        <span className="ml-[7px]"><ShowHide /></span>
        <Caret c="ml-[7px]" />
        <Sep c="ml-[10px]" />
      </div>

      {/* main */}
      <div className="flex flex-1 min-h-0">
        <div className="flex flex-col items-center w-[26px] shrink-0 overflow-visible bg-[#d9d9d9] border-r border-[#aaa]">
          <div className="flex items-center justify-center h-[26px] w-full">
            <Svg c="w-[15px] h-[15px] mr-[7px]">
              <circle cx="8" cy="8" r="4.500" fill="none" stroke="#333" strokeWidth="2" />
              <path d="M8 1v2.500M8 12.500V15M1 8h2.500M12.500 8H15M3 3l1.800 1.800M11.200 11.200L13 13M3 13l1.800-1.800M11.200 4.800L13 3" stroke="#333" strokeWidth="1.600" />
            </Svg>
          </div>
          <div className="mt-[24px]"><RailAssembly /></div>
          <div className="mt-[14px]"><RailMirror /></div>
          <div className="mt-[12px]"><RailTool /></div>
          <div className="flex items-center justify-center self-start w-[26px] h-[43px] mt-[8px] mr-[-1px] bg-white border-y border-[#aaa]"><RailOps /></div>
          <div className="mt-[8px]"><RailMesh /></div>
          <div className="mt-[16px]"><RailMachine /></div>
          <div className="mt-[15px]"><RailBooks /></div>
          <div className="mt-[29px]"><RailInfo /></div>
          <div className="mt-[29px]"><RailWeb /></div>
          <Svg c="w-[24px] h-[6px] mt-[16px]" v="0 0 24 6">
            <path d="M0 4c6 2 8-3 14-3 4 0 6 1 10 1" fill="none" stroke="#666" />
          </Svg>
          <div className="flex flex-col items-center justify-center h-[8px] mt-[5px] gap-px">
            <span className="block w-0 h-0 border-x-[3.5px] border-b-[4px] border-x-transparent border-b-[#aaa]" />
            <span className="block w-[7px] h-px bg-[#aaa]" />
          </div>
          <span className="block w-0 h-0 mt-[10px] border-x-[3.5px] border-b-[4px] border-x-transparent border-b-[#aaa]" />
          <Caret c="mt-[11px]" />
          <div className="flex flex-col items-center mt-[9px] gap-px">
            <span className="block w-[7px] h-px bg-[#222]" />
            <Caret />
          </div>
        </div>

        <div className="flex flex-col w-[332px] shrink-0 pl-[7px] border-r border-[#ccc]">
          <div className="flex items-center justify-between h-[30px] shrink-0 pl-[3px] pr-[16px]">
            <span className="text-[12px] whitespace-nowrap">工序导航器 - 程序顺序</span>
            <span className="block w-[12px] h-[11px] border border-[#222] border-t-2" />
          </div>
          <div className="flex flex-col w-[315px] h-[484px] shrink-0 border border-[#ccc] bg-white">
            <div className="flex h-[20px] shrink-0 bg-[#eee] border-b border-[#ddd] text-[12.5px] text-[#333]">
              <div className="flex items-center w-[200px] pl-[6px] pt-px border-r border-[#ccc]">名称</div>
              <div className="flex items-center w-[102px] pl-[6px] pt-px border-r border-[#ccc]">换刀</div>
              <div className="flex items-center flex-1 overflow-hidden pl-[4px] pt-px">刀</div>
            </div>
            <div className="flex flex-col h-[446px] shrink-0 overflow-hidden relative">
              {Array.from({ length: 23 }).map((_, i) => (
                <Row key={i} index={i} row={treeRows[i]} />
              ))}
              <svg viewBox="0 0 70 150" className="absolute top-0 left-0 w-[70px] h-[150px]">
                <path d="M9.500 30V130M10 30H19M10 50H22M10 70H20M10 130H20M28 80V110M28 90H38M28 110H38M28 140V150" fill="none" stroke="#888" strokeDasharray="1 1" />
                <path d="M28 140V150H38" fill="none" stroke="#888" strokeDasharray="1 1" />
              </svg>
            </div>
            <div className="flex items-center h-[16px] shrink-0 mt-px bg-[#eee]">
              <span className="block w-0 h-0 ml-[7px] border-y-[4px] border-r-[4px] border-y-transparent border-r-[#333]" />
              <div className="flex items-center justify-center w-[94px] h-[14px] ml-[7px] rounded-[2px] border border-[#999] bg-gradient-to-b from-[#eee] to-[#c4c4c4] text-[7px] leading-none tracking-[-0.5px] text-[#444]">|||</div>
              <span className="block w-0 h-0 ml-auto mr-[7px] border-y-[4px] border-l-[4px] border-y-transparent border-l-[#333]" />
            </div>
          </div>
          <div className="w-[315px] h-[6px] mt-[2px] shrink-0 bg-[#e4e4e4] border border-[#bbb]" />
        </div>

        <div className="flex-1 min-w-0">
          <Viewport />
        </div>
      </div>
    </div>
  );
}
